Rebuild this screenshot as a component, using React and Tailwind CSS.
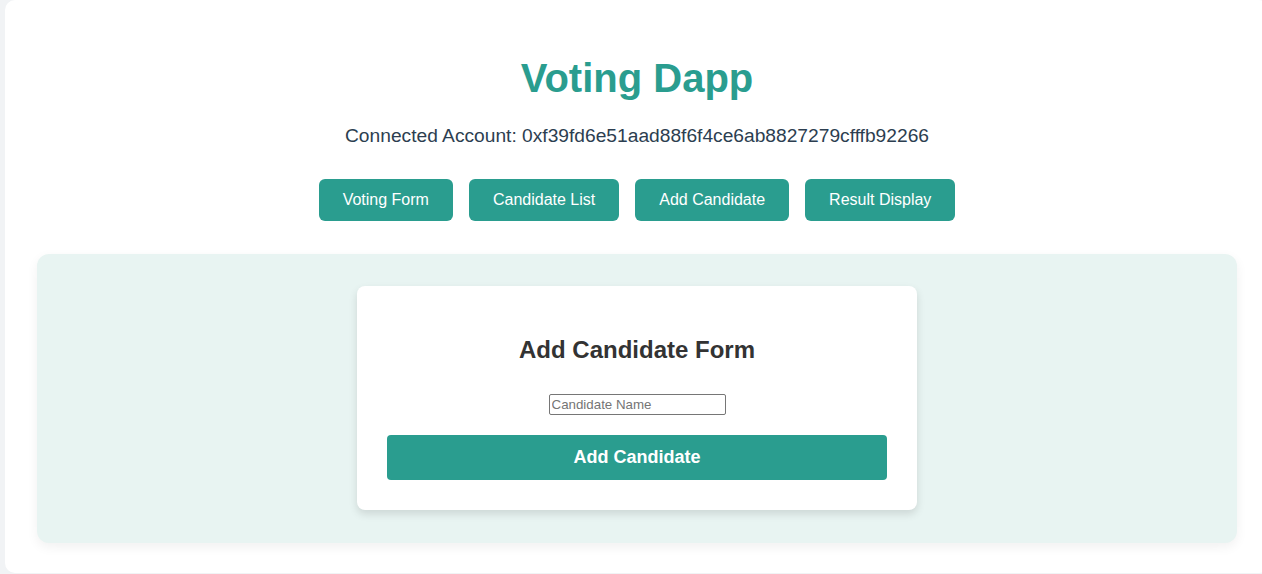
import { useState } from 'react';

const TABS = ['Voting Form', 'Candidate List', 'Add Candidate', 'Result Display'];

export default function App() {
  const [tab, setTab] = useState('Add Candidate');
  const [name, setName] = useState('');

  return (
    <div className="w-full h-[574px] overflow-hidden bg-[#f1f3f5] font-['Liberation_Sans',Arial,sans-serif]">
      <div className="ml-[5px] w-[1264px] h-[573px] bg-white rounded-[10px] px-8 pt-[55px] flex flex-col items-center">
        <h1 className="text-[40px] leading-[46px] font-bold text-[#2a9d8f]">Voting Dapp</h1>
        <p className="mt-[21px] text-[19.2px] leading-[28px] text-[#2c3e50]">
          Connected Account: 0xf39fd6e51aad88f6f4ce6ab8827279cfffb92266
        </p>

        <div className="mt-[29px] flex gap-4">
          {TABS.map(t => (
            <button key={t} onClick={() => setTab(t)}
              className="h-[42px] px-6 rounded-md bg-[#2a9d8f] text-white text-[16px]">
              {t}
            </button>
          ))}
        </div>

        <div className="mt-[33px] w-full h-[289px] bg-[#e8f4f2] rounded-xl p-8 flex justify-center shadow-[0_4px_12px_rgba(0,0,0,0.06)]">
          <div className="w-[560px] h-[224px] bg-white rounded-lg px-[30px] pt-[30px] flex flex-col items-center shadow-[0_4px_8px_rgba(0,0,0,0.12)]">
            <h2 className="mt-[20px] text-[24px] leading-[28px] font-bold text-[#333333]">Add Candidate Form</h2>
            <input
              value={name}
              onChange={e => setName(e.target.value)}
              placeholder="Candidate Name"
              className="mt-[30px] w-[177px] h-[21px] border border-[#767676] rounded-[2px] px-[2px] text-[13.33px] text-black placeholder:text-[#757575] outline-none"
            />
            <button className="mt-[20px] w-full h-[45px] rounded-[4px] bg-[#2a9d8f] text-white text-[18px] font-bold">
              Add Candidate
            </button>
          </div>
        </div>
      </div>
    </div>
  );
}
